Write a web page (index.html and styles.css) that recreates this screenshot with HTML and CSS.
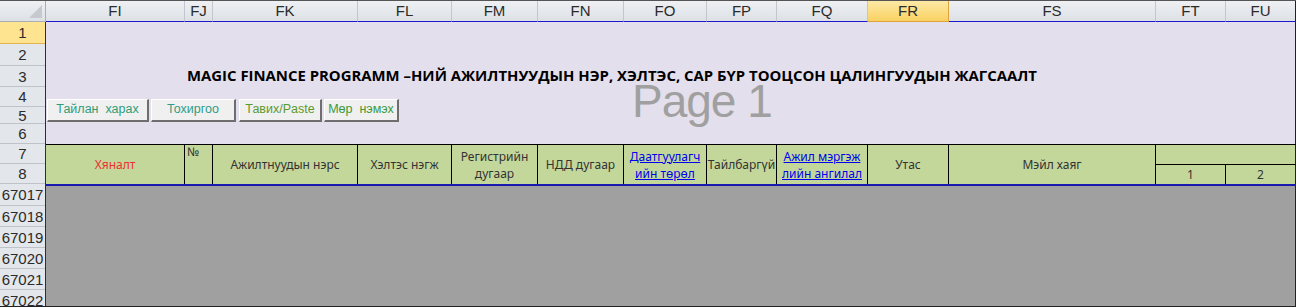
FILE: index.html
```html
<!DOCTYPE html>
<html lang="mn">
<head>
    <meta charset="UTF-8">
    <title>Magic Finance - Ажилтнууд</title>
    <link rel="stylesheet" href="styles.css">
</head>
<body>

<div class="sheet">
    <div class="colhead">
        <div class="corner"><span class="corner-tri"></span></div>
        <div class="col w-fi">FI</div>
        <div class="col w-fj">FJ</div>
        <div class="col w-fk">FK</div>
        <div class="col w-fl">FL</div>
        <div class="col w-fm">FM</div>
        <div class="col w-fn">FN</div>
        <div class="col w-fo">FO</div>
        <div class="col w-fp">FP</div>
        <div class="col w-fq">FQ</div>
        <div class="col w-fr selected">FR</div>
        <div class="col w-fs">FS</div>
        <div class="col w-ft">FT</div>
        <div class="col w-fu last">FU</div>
    </div>

    <div class="body">
        <div class="rowhead">
            <div class="rn h22 selected">1</div>
            <div class="rn h22">2</div>
            <div class="rn h21">3</div>
            <div class="rn h20">4</div>
            <div class="rn h17">5</div>
            <div class="rn h20">6</div>
            <div class="rn h20">7</div>
            <div class="rn h20">8</div>
            <div class="rn h22">67017</div>
            <div class="rn h21">67018</div>
            <div class="rn h21">67019</div>
            <div class="rn h21">67020</div>
            <div class="rn h21">67021</div>
            <div class="rn h21">67022</div>
        </div>

        <div class="main">
            <div class="page">
                <div class="title">MAGIC FINANCE PROGRAMM –НИЙ АЖИЛТНУУДЫН НЭР, ХЭЛТЭС, САР БҮР ТООЦСОН ЦАЛИНГУУДЫН ЖАГСААЛТ</div>
                <div class="buttons">
                    <button class="btn btn-report">Тайлан&nbsp; харах</button>
                    <button class="btn btn-settings">Тохиргоо</button>
                    <button class="btn btn-paste">Тавих/Paste</button>
                    <button class="btn btn-addrow">Мөр&nbsp; нэмэх</button>
                </div>
                <div class="watermark">Page 1</div>
            </div>

            <div class="thead">
                <div class="th span2 red">Хяналт</div>
                <div class="th span2 top-left">№</div>
                <div class="th span2">Ажилтнуудын нэрс</div>
                <div class="th span2">Хэлтэс нэгж</div>
                <div class="th span2">Регистрийн<br>дугаар</div>
                <div class="th span2">НДД дугаар</div>
                <div class="th span2 link"><span>Даатгуулагч<br>ийн төрөл</span></div>
                <div class="th span2">Тайлбаргүй</div>
                <div class="th span2 link"><span>Ажил мэргэж<br>лийн ангилал</span></div>
                <div class="th span2">Утас</div>
                <div class="th span2">Мэйл хаяг</div>
                <div class="th merged"></div>
                <div class="th sub">1</div>
                <div class="th sub">2</div>
            </div>

            <div class="outside"></div>
        </div>
    </div>
</div>

</body>
</html>
```

FILE: styles.css
```css
html, body {
    margin: 0;
    padding: 0;
}
body {
    width: 1296px;
    height: 307px;
    overflow: hidden;
    background-color: #a0a0a0;
    font-family: "Liberation Sans", Arial, sans-serif;
}
.sheet {
    width: 1296px;
    height: 307px;
    box-sizing: border-box;
    border-top: 1px solid #555;
    border-bottom: 1px solid #222;
    display: flex;
    flex-direction: column;
    overflow: hidden;
}

/* column letters */
.colhead {
    display: flex;
    height: 21px;
    flex-shrink: 0;
}
.corner, .col {
    box-sizing: border-box;
    height: 21px;
    background: linear-gradient(#eef0f3, #dde1e6);
    border-right: 1px solid #c3c7cd;
    border-bottom: 1px solid #a9aeb5;
    color: #2b2b2b;
    font-size: 15px;
    line-height: 20px;
    text-align: center;
}
.corner {
    width: 46px;
    position: relative;
    border-right-color: #a9aeb5;
}
.corner-tri {
    position: absolute;
    right: 3px;
    bottom: 3px;
    width: 0;
    height: 0;
    border-left: 13px solid transparent;
    border-bottom: 13px solid #c6cacf;
}
.col {
    border-bottom-color: #1a1acc;
}
.col.selected {
    background: linear-gradient(#fde9a6, #f9d162);
    border-right-color: #e0a43c;
    border-bottom-color: #e0a43c;
}
.col.last {
    border-right-color: #222;
}
.w-fi { width: 139px; }
.w-fj { width: 28px; }
.w-fk { width: 145px; }
.w-fl { width: 94px; }
.w-fm { width: 86px; }
.w-fn { width: 86px; }
.w-fo { width: 83px; }
.w-fp { width: 70px; }
.w-fq { width: 91px; }
.w-fr { width: 81px; }
.w-fs { width: 207px; }
.w-ft { width: 70px; }
.w-fu { width: 70px; }

.body {
    display: flex;
    flex: 1;
    min-height: 0;
}

/* row numbers */
.rowhead {
    width: 45px;
    flex-shrink: 0;
    display: flex;
    flex-direction: column;
    overflow: hidden;
}
.rn {
    box-sizing: border-box;
    flex-shrink: 0;
    background-color: #e3e6ea;
    border-bottom: 1px solid #bfc3c9;
    color: #2b2b2b;
    font-size: 15px;
    text-align: center;
    display: flex;
    align-items: center;
    justify-content: center;
    white-space: nowrap;
}
.rn.selected {
    background-color: #fee391;
    border-bottom-color: #e6b24c;
}
.h22 { height: 22px; }
.h21 { height: 21px; }
.h20 { height: 20px; }
.h17 { height: 17px; }

.main {
    flex: 1;
    display: flex;
    flex-direction: column;
    border-left: 1px solid #1a1acc;
    min-width: 0;
}

/* printable page area */
.page {
    position: relative;
    height: 122px;
    flex-shrink: 0;
    background-color: #e4dfec;
    border-right: 1px solid #222;
    box-sizing: border-box;
}
.title {
    padding: 45px 0 0 141px;
    height: 16px;
    line-height: 16px;
    font-family: "Open Sans", "Noto Sans", sans-serif;
    font-weight: 700;
    font-size: 14.9px;
    color: #000;
    white-space: nowrap;
}
.buttons {
    display: flex;
    gap: 2px;
    margin-top: 16px;
    padding-left: 1px;
}
.btn {
    height: 23px;
    box-sizing: border-box;
    margin: 0;
    padding: 0 0 2px 0;
    background-color: #f0f0f0;
    border-style: solid;
    border-width: 1px 2px 2px 1px;
    border-color: #ffffff #6e6e6e #6e6e6e #ffffff;
    font-family: "Liberation Sans", Arial, sans-serif;
    font-size: 12.5px;
    white-space: nowrap;
}
.btn-report { width: 102px; color: #2f9c78; }
.btn-settings { width: 85px; color: #2f9c86; }
.btn-paste { width: 83px; color: #5b9a2e; margin-left: 1px; }
.btn-addrow { width: 75px; color: #3a9a3c; }

.watermark {
    position: absolute;
    left: 586px;
    top: 62px;
    font-size: 46px;
    line-height: 34px;
    letter-spacing: -1px;
    color: #a0a0a0;
    white-space: nowrap;
}

/* table header rows 7-8 */
.thead {
    display: grid;
    grid-template-columns: 139px 28px 145px 94px 86px 86px 83px 70px 91px 81px 207px 70px 70px;
    grid-template-rows: 20px 19px;
    background-color: #c4d79b;
    border-top: 1px solid #000;
    border-bottom: 2px solid #1a1ab0;
    flex-shrink: 0;
    font-family: "Noto Sans", sans-serif;
    font-size: 12px;
    color: #333;
}
.th {
    box-sizing: border-box;
    border-right: 1px solid #000;
    display: flex;
    align-items: center;
    justify-content: center;
    text-align: center;
    line-height: 17px;
    white-space: nowrap;
}
.span2 {
    grid-row: 1 / 3;
}
.th.red {
    color: #f03030;
}
.th.top-left {
    align-items: flex-start;
    justify-content: flex-start;
    padding: 0 0 0 2px;
    line-height: 14px;
}
.th.link {
    color: #0000ee;
    text-decoration: underline;
}
.th.merged {
    grid-column: 12 / 14;
    border-bottom: 1px solid #000;
    border-right-color: #222;
}
.th.sub {
    padding-bottom: 1px;
}
.th.sub:last-child {
    border-right-color: #222;
}

.outside {
    flex: 1;
    background-color: #a0a0a0;
    border-right: 1px solid #222;
}
```
